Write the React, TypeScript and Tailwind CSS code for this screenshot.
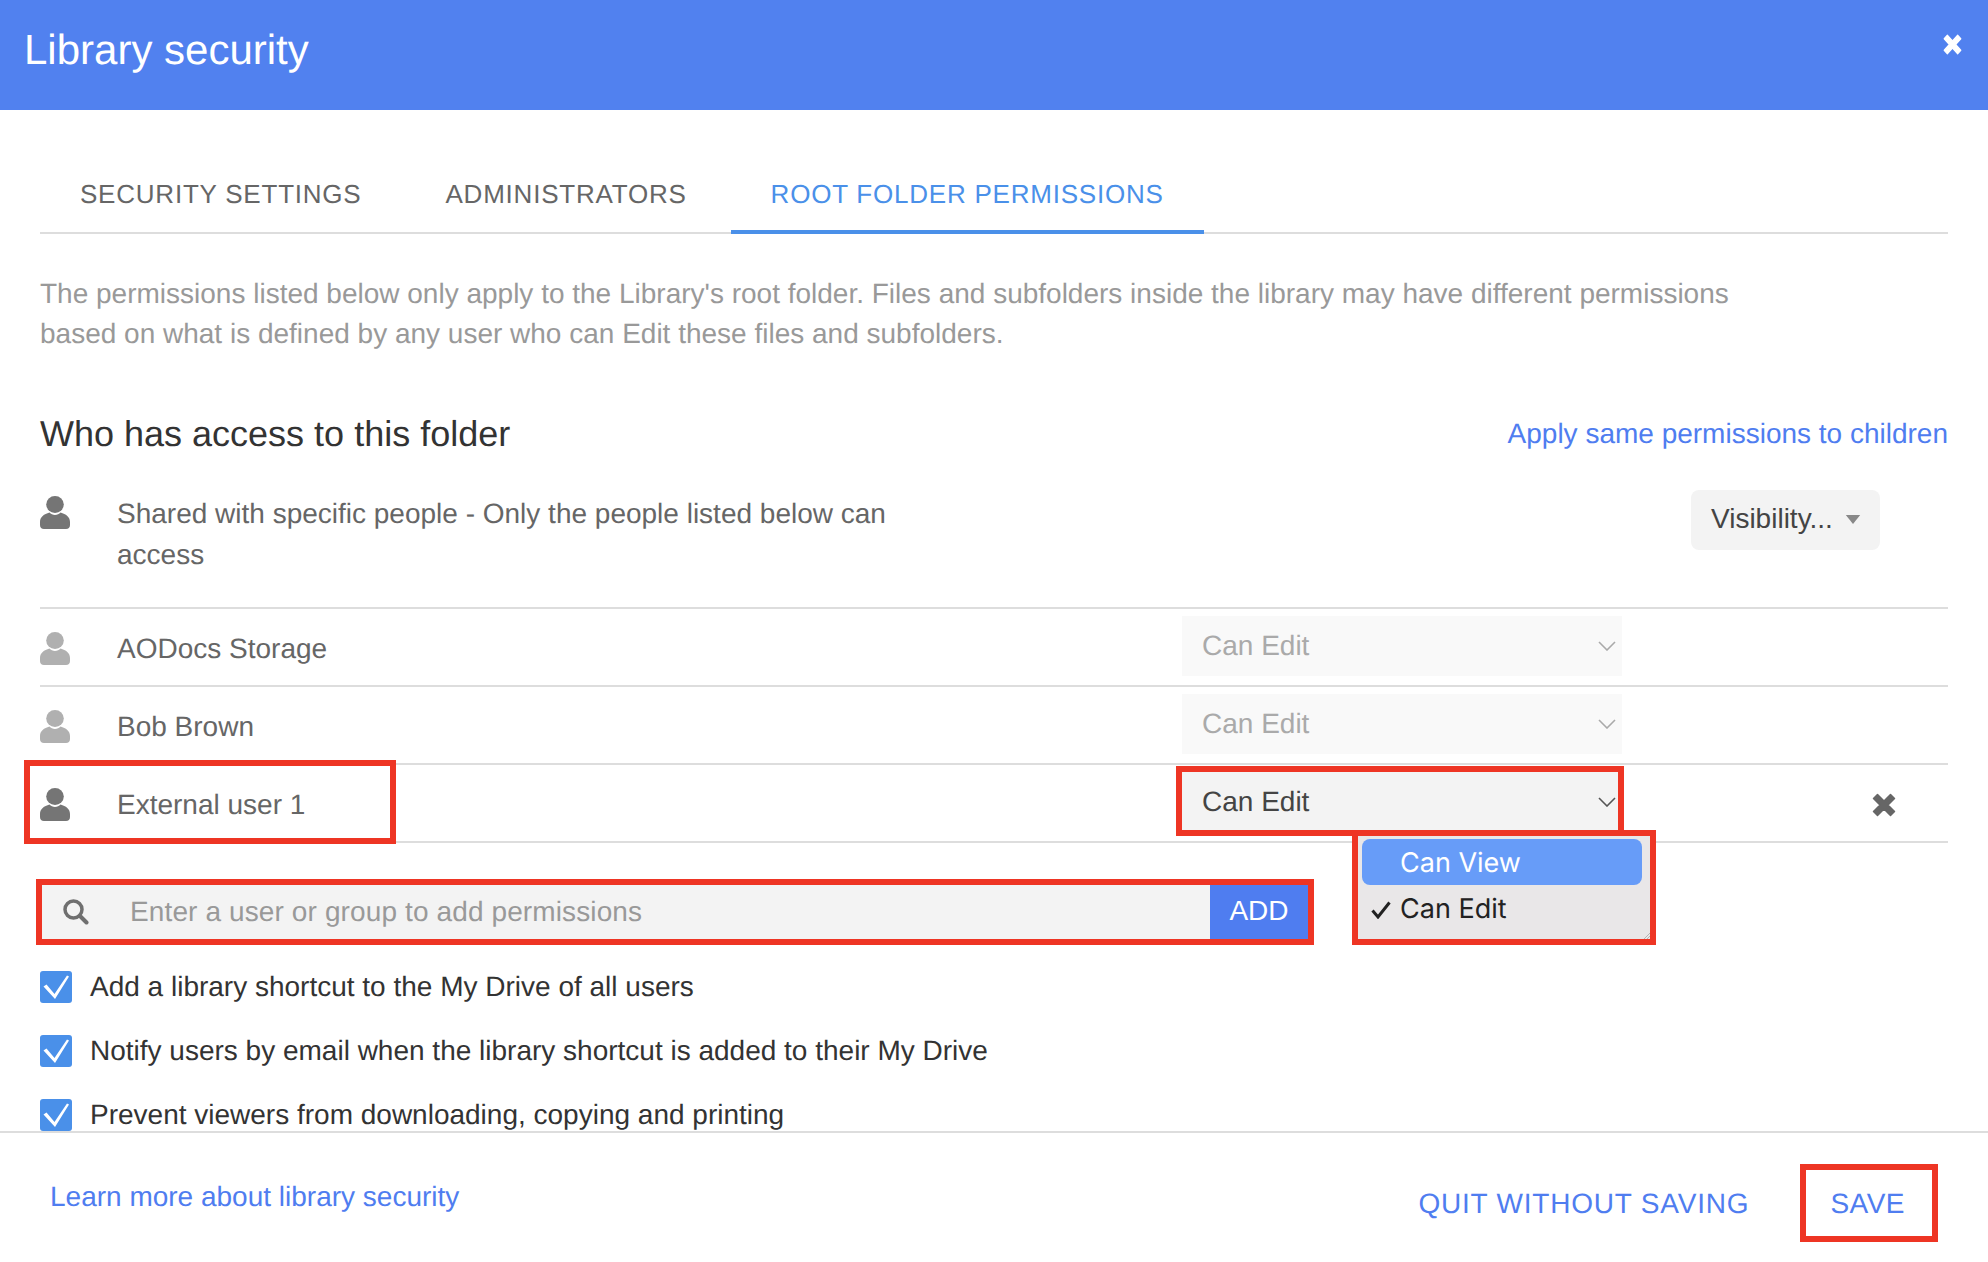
/**
 * Library security dialog, root folder permissions tab.
 */

const FONT = "font-['Liberation_Sans',Arial,sans-serif]";

function UserIcon({ className }: { className: string }) {
  return (
    <svg viewBox="0 0 30 33" className={`h-[33px] w-[30px] shrink-0 fill-current ${className}`}>
      <ellipse cx="15" cy="8.5" rx="8.800" ry="8.500" />
      <path d="M0 29v-3c0-5 4-8 9.500-9.500 2.500 3.200 8.500 3.200 11 0C26 18 30 21 30 26v3c0 2.500-1.500 4-4 4H4c-2.500 0-4-1.500-4-4z" />
    </svg>
  );
}

function CrossIcon({ className }: { className: string }) {
  return (
    <svg viewBox="0 0 24 24" preserveAspectRatio="none" className={`fill-current stroke-current ${className}`}>
      <path strokeWidth="1.5" strokeLinejoin="round" d="M5.500 1.500 12 8l6.500-6.500 4 4L16 12l6.500 6.500-4 4L12 16l-6.500 6.500-4-4L8 12 1.500 5.500z" />
    </svg>
  );
}

function Chevron({ className }: { className: string }) {
  return (
    <svg viewBox="0 0 18 10" className={`h-[10px] w-[18px] fill-none stroke-current ${className}`}>
      <path strokeWidth="1.600" d="M1 1l8 8 8-8" />
    </svg>
  );
}

// red annotation frame drawn over the screenshot
function RedBox({ className }: { className: string }) {
  return <div className={`pointer-events-none absolute z-20 border-[6px] border-[#ee3524] ${className}`} />;
}

function PermissionSelect({ active = false }: { active?: boolean }) {
  return (
    <div className={`flex h-[60px] w-[440px] items-center justify-between pl-5 pr-[6px] text-[28px] ${active ? "bg-[#f3f3f3] text-[#444444]" : "bg-[#f9f9f9] text-[#aaaaaa]"}`}>
      <span>Can Edit</span>
      <Chevron className={active ? "text-[#555555]" : "text-[#aaaaaa]"} />
    </div>
  );
}

function PermissionRow({ name, active = false }: { name: string; active?: boolean }) {
  return (
    <div className="relative grid h-[78px] grid-cols-[77px_1065px_440px_1fr] border-t-2 border-[#dddddd]">
      <UserIcon className={`mt-[23px] ${active ? "text-[#757575]" : "text-[#b0b0b0]"}`} />
      <div className="mt-5 text-[28px] leading-10 text-[#666666]">{name}</div>
      <div className="relative mt-[7px]">
        <PermissionSelect active={active} />
        {active && (
          <>
            <RedBox className="left-[-6px] top-[-6px] h-[70px] w-[448px]" />
            <div className="absolute left-[170px] top-[58px] z-30 h-[115px] w-[304px] border-[6px] border-[#ee3524] bg-[#e9e7e8] pl-1 pr-2 pt-[3px] font-['Inter',sans-serif] text-[27px] text-[#222222]">
              <div className="flex h-[46px] items-center rounded-lg bg-[#679cf8] pl-[38px] pt-[2px] text-white">Can View</div>
              <div className="relative flex h-[48px] items-center pl-[38px]">
                <svg viewBox="0 0 20 18" className="absolute left-[9px] top-[16px] h-[18px] w-5 fill-none stroke-[#222222]">
                  <path strokeWidth="3" d="M1.500 9.500 7 16 18.500 1.500" />
                </svg>
                Can Edit
              </div>
              <svg viewBox="0 0 6 6" className="absolute bottom-0 right-0 h-[6px] w-[6px] fill-none stroke-[#b5b5b5]">
                <path d="M0 6l6-6M3 6l3-3" />
              </svg>
            </div>
          </>
        )}
      </div>
      {active && (
        <div className="pl-[250px] pt-[28px]">
          <CrossIcon className="h-[24px] w-[24px] text-[#666666]" />
        </div>
      )}
      {active && <RedBox className="left-[-16px] top-[-5px] h-[84px] w-[372px]" />}
    </div>
  );
}

function OptionRow({ label }: { label: string }) {
  return (
    <div className="flex h-8 items-center">
      <span className="flex h-8 w-8 shrink-0 items-center justify-center rounded-[3px] bg-[#4a90e9]">
        <svg viewBox="0 0 32 32" className="h-8 w-8 fill-white">
          <path d="M3.500 15.500 6.500 13.500 14.500 23 27 4.500 29 5.500 15 28z" />
        </svg>
      </span>
      <span className="ml-[18px] text-[28px] text-[#333333]">{label}</span>
    </div>
  );
}

export default function App() {
  return (
    <div className={`flex h-[1262px] w-[1988px] flex-col overflow-hidden bg-white [text-rendering:geometricPrecision] ${FONT}`}>
      <header className="flex h-[110px] shrink-0 items-start justify-between bg-[#5181ef] pl-6 pr-[26px] text-white">
        <h1 className="mt-[25px] text-[42px] leading-[50px]">Library security</h1>
        <CrossIcon className="mt-[34px] h-[21px] w-[19px]" />
      </header>

      <main className="min-h-0 flex-1 overflow-hidden px-10">
        <nav className="mt-11 flex h-20 gap-1 border-b-2 border-[#dddddd] text-[26px] tracking-[0.78px] text-[#666666]">
          <div className="flex h-20 items-center px-10">SECURITY SETTINGS</div>
          <div className="flex h-20 items-center px-10">ADMINISTRATORS</div>
          <div className="flex h-20 items-center border-b-4 border-[#4a90e9] px-10 pt-[4px] text-[#4a90e9]">ROOT FOLDER PERMISSIONS</div>
        </nav>

        <p className="mt-[40px] text-[28px] leading-10 text-[#999999]">
          The permissions listed below only apply to the Library's root folder. Files and subfolders inside the library may have different permissions
          <br />
          based on what is defined by any user who can Edit these files and subfolders.
        </p>

        <div className="mt-[55px] flex h-[50px] items-center justify-between">
          <h2 className="text-[36px] text-[#333333]">Who has access to this folder</h2>
          <a className="text-[28px] text-[#4f7df0]">Apply same permissions to children</a>
        </div>

        <div className="mt-[34px] flex h-[114px] items-start">
          <UserIcon className="mt-[3px] text-[#757575]" />
          <div className="ml-[47px] w-[780px] text-[28px] leading-[41px] text-[#666666]">Shared with specific people - Only the people listed below can access</div>
          <button className="ml-auto mr-[68px] mt-[-3px] flex h-[60px] w-[189px] items-center rounded-lg bg-[#f3f3f3] pb-[2px] pl-5 text-[28px] text-[#444444]">
            Visibility...
            <svg viewBox="0 0 16 10" className="ml-3 h-[9px] w-4 fill-[#888888]">
              <path d="M0 0h16L8 10z" />
            </svg>
          </button>
        </div>

        <PermissionRow name="AODocs Storage" />
        <PermissionRow name="Bob Brown" />
        <PermissionRow name="External user 1" active />
        <div className="border-t-2 border-[#dddddd]" />

        <div className="relative ml-[2px] mt-[42px] flex h-[54px] w-[1266px] bg-[#f3f3f3]">
          <svg viewBox="0 0 26 26" className="ml-[21px] mt-[14px] h-[26px] w-[26px] fill-none stroke-[#6f6f6f]">
            <circle cx="10.500" cy="10.500" r="8.500" strokeWidth="3.500" />
            <path strokeWidth="4" strokeLinecap="round" d="M17 17l6.500 6.500" />
          </svg>
          <span className="ml-[41px] self-center text-[28px] tracking-[0.12px] text-[#999999]">Enter a user or group to add permissions</span>
          <button className="ml-auto flex w-[98px] items-center justify-center bg-[#4f7df0] pb-[2px] text-[28px] text-white">ADD</button>
          <RedBox className="inset-[-6px]" />
        </div>

        <div className="mt-8 flex flex-col gap-8">
          <OptionRow label="Add a library shortcut to the My Drive of all users" />
          <OptionRow label="Notify users by email when the library shortcut is added to their My Drive" />
          <OptionRow label="Prevent viewers from downloading, copying and printing" />
        </div>
      </main>

      <footer className="flex h-[131px] shrink-0 items-start border-t-2 border-[#dddddd] pl-[50px] pr-[83px] text-[#4f7df0]">
        <a className="mt-11 text-[28px] leading-10">Learn more about library security</a>
        <a className="ml-auto mt-[51px] text-[28px] leading-10 tracking-[0.8px]">QUIT WITHOUT SAVING</a>
        <a className="relative ml-[81px] mt-[51px] text-[28px] leading-10 tracking-[0.5px]">
          SAVE
          <RedBox className="left-[-30px] top-[-20px] h-[78px] w-[138px]" />
        </a>
      </footer>
    </div>
  );
}
